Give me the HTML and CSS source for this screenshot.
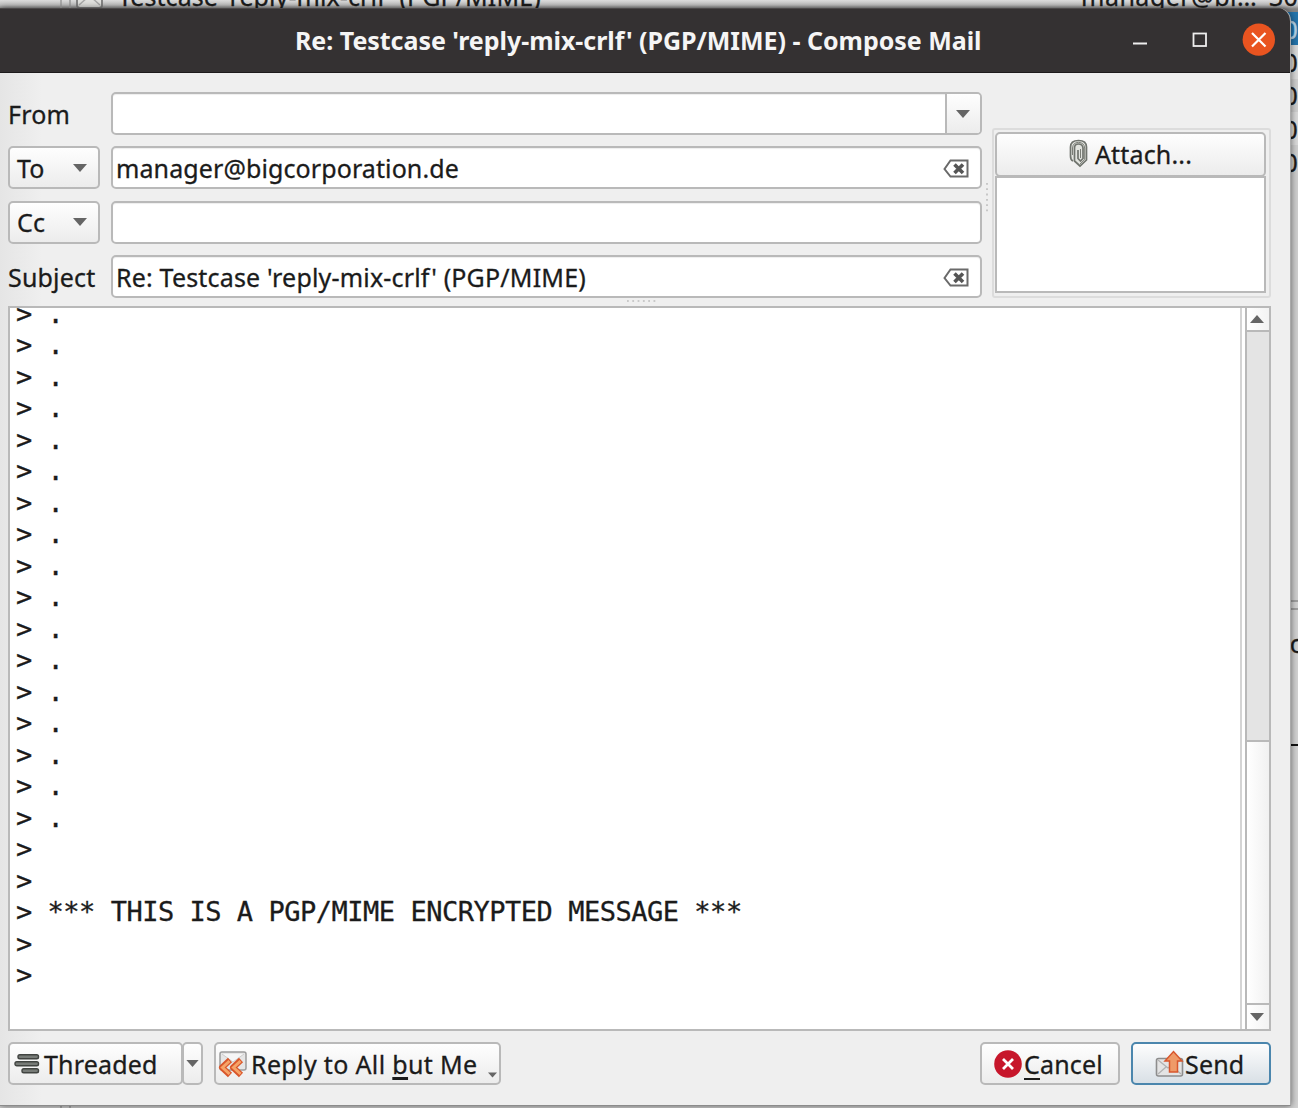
FILE: index.html
```
<!DOCTYPE html>
<html lang="en">
<head>
<meta charset="utf-8">
<title>Compose Mail</title>
<link rel="stylesheet" href="styles.css">
</head>
<body>
<div class="desktop">
  <div class="mail-list">
    <div class="row first"><span class="gutter"></span><svg class="envelope" width="27" height="26" viewBox="0 0 27 26"><rect x="1" y="1" width="25" height="24" rx="3" fill="#e2e2df" stroke="#858585" stroke-width="2"/><path d="M3 22 12 14h3l9 8" fill="none" stroke="#aaa" stroke-width="1.5"/></svg><span class="subject">Testcase 'reply-mix-crlf' (PGP/MIME)</span><span class="sender">manager@bi…</span><span class="date">30</span></div>
    <div class="row selected">0</div>
    <div class="row">0</div>
    <div class="row alt">0</div>
    <div class="row">0</div>
    <div class="row alt">0</div>
    <div class="filler"></div>
    <div class="splitter"></div>
    <div class="preview"><span class="peek">rc</span></div>
    <div class="below"><span class="gutter"></span></div>
  </div>

  <main class="window">
    <header class="titlebar">
      <h1 class="title">Re: Testcase 'reply-mix-crlf' (PGP/MIME) - Compose Mail</h1>
      <svg class="controls" width="150" height="64" viewBox="0 0 150 64">
        <path d="M0 35.500h14" stroke="#eee" stroke-width="2"/>
        <rect x="60.500" y="25.500" width="12.500" height="12.500" fill="none" stroke="#eee" stroke-width="1.800"/>
        <circle cx="125.800" cy="31.600" r="16.200" fill="#e95420"/>
        <path d="m119 25 13.500 13.500m0-13.500-13.500 13.500" stroke="#fff" stroke-width="2.200"/>
      </svg>
    </header>

    <section class="headers">
      <div class="fields">
        <div class="label">From</div>
        <div class="input combo"><span class="drop"><svg width="14" height="8" viewBox="0 0 14 8"><path d="M0 0h14L7 8z" fill="#656565"/></svg></span></div>
        <button class="btn kind"><span>To</span><svg width="14" height="8" viewBox="0 0 14 8"><path d="M0 0h14L7 8z" fill="#656565"/></svg></button>
        <div class="input"><span class="address">manager@bigcorporation.de</span><svg class="clear" width="26" height="20" viewBox="0 0 26 20"><path d="M1.500 10 7.500 1.500h17v16H7.500z" fill="#fff" stroke="#6a6a6a" stroke-width="2"/><path d="m11.500 5.500 8.500 8.500m0-8.500-8.500 8.500" stroke="#555" stroke-width="3.600"/></svg></div>
        <button class="btn kind"><span>Cc</span><svg width="14" height="8" viewBox="0 0 14 8"><path d="M0 0h14L7 8z" fill="#656565"/></svg></button>
        <div class="input"></div>
        <div class="label">Subject</div>
        <div class="input"><span>Re: Testcase 'reply-mix-crlf' (PGP/MIME)</span><svg class="clear" width="26" height="20" viewBox="0 0 26 20"><path d="M1.500 10 7.500 1.500h17v16H7.500z" fill="#fff" stroke="#6a6a6a" stroke-width="2"/><path d="m11.500 5.500 8.500 8.500m0-8.500-8.500 8.500" stroke="#555" stroke-width="3.600"/></svg></div>
      </div>
      <div class="grip-v"><svg width="4" height="32" viewBox="0 0 4 32"><path d="M2 2v30" stroke="#bdbdbd" stroke-width="1.600" stroke-dasharray="1.800 3.500"/></svg></div>
      <aside class="attachments">
        <button class="btn attach"><svg width="20" height="30" viewBox="0 0 20 30"><path d="M4 22Q1.500 21 1.500 17V8Q1.500 1.500 9.500 1.500T17.500 8v13L11 27 5.500 22V9Q5.500 5 9.500 5T14 9v10.500L11.500 22 9 19.500V11" fill="#e2e4df" stroke="#70746e" stroke-width="1.700"/><path d="M3.500 16V9Q4 3.400 9.500 3.400T15.700 9v11.500L11 25M11.500 10v9" fill="none" stroke="#7b7e77" stroke-width="1"/></svg><span>Attach...</span></button>
        <div class="list"></div>
      </aside>
    </section>
    <div class="grip-h"><svg width="30" height="4" viewBox="0 0 30 4"><path d="M1 2h29" stroke="#bdbdbd" stroke-width="1.600" stroke-dasharray="1.800 3.500"/></svg></div>

    <section class="editor">
<pre class="text">&gt; .
&gt; .
&gt; .
&gt; .
&gt; .
&gt; .
&gt; .
&gt; .
&gt; .
&gt; .
&gt; .
&gt; .
&gt; .
&gt; .
&gt; .
&gt; .
&gt; .
&gt;
&gt;
&gt; *** THIS IS A PGP/MIME ENCRYPTED MESSAGE ***
&gt;
&gt;</pre>
      <div class="scrollbar">
        <div class="arrow up"><svg width="14" height="8" viewBox="0 0 14 8"><path d="M0 8h14L7 0z" fill="#656565"/></svg></div>
        <div class="track"></div>
        <div class="thumb"></div>
        <div class="arrow down"><svg width="14" height="8" viewBox="0 0 14 8"><path d="M0 0h14L7 8z" fill="#656565"/></svg></div>
      </div>
    </section>

    <footer class="actions">
      <button class="btn threaded"><svg width="26" height="22" viewBox="0 0 26 22"><g fill="#777b77" stroke="#414441" stroke-width="1.400"><rect x="4" y="1.700" width="20.500" height="4" rx="1.800"/><rect x="1" y="8.700" width="23.500" height="4" rx="1.800"/><rect x="8" y="15.700" width="16.500" height="4" rx="1.800"/></g></svg><span>Threaded</span></button>
      <button class="btn more"><svg width="13" height="7" viewBox="0 0 14 8"><path d="M0 0h14L7 8z" fill="#656565"/></svg></button>
      <button class="btn reply"><svg width="30" height="30" viewBox="0 0 30 30"><rect x="3" y="3" width="26" height="18" rx="2" fill="#e6e6e6" stroke="#9c9c9c" stroke-width="1.500"/><path d="m5 5 11 8 11-8" fill="#f6f6f6" stroke="#ccc"/><path d="m13 11-8 7.500 8 7.500M24 11l-8 7.500 8 7.500" fill="none" stroke="#d9562b" stroke-width="6" stroke-linejoin="round"/><path d="m12.500 12-7 6.500 7 6.500M23.500 12l-7 6.500 7 6.500" fill="none" stroke="#f6a468" stroke-width="3"/></svg><span class="reply-text">Reply to All <span class="key">b</span>ut Me</span><svg class="menu" width="9" height="6" viewBox="0 0 14 8"><path d="M0 0h14L7 8z" fill="#656565"/></svg></button>
      <span class="spacer"></span>
      <button class="btn cancel"><svg width="28" height="28" viewBox="0 0 28 28"><circle cx="14" cy="14" r="13.800" fill="#c7162b"/><path d="m9 9 10 10m0-10L9 19" stroke="#fff" stroke-width="2.800"/></svg><span><span class="key thin">C</span>ancel</span></button>
      <button class="btn send"><svg width="29" height="28" viewBox="0 0 29 28"><rect x="1.500" y="8.500" width="26" height="17.500" rx="2" fill="#e4e4e4" stroke="#8d8d8d" stroke-width="1.600"/><path d="m3 10 10 8 13-8M3 24l8-7m7 0 8 7" fill="none" stroke="#b2b2b2" stroke-width="1.300"/><path d="M14.500 22V11H10L18.500 1.500 27 11H22.500v11z" fill="#ef9a68" stroke="#d8572e" stroke-width="1.500"/></svg><span>Send</span></button>
    </footer>
  </main>
</div>
</body>
</html>
```
FILE: styles.css
```
* { box-sizing: border-box; }
body { margin: 0; font: 25px/32px "Noto Sans", sans-serif; letter-spacing: .18px; color: #1b1b1b; -webkit-text-stroke: .3px; }
svg { display: block; flex: none; }
.desktop { position: relative; width: 1298px; height: 1108px; overflow: hidden; background: #d2d2d2; }

/* mail client behind the compose window */
.mail-list { display: flex; flex-direction: column; height: 1108px; }
.row { height: 33.300px; display: flex; align-items: center; justify-content: flex-end; overflow: hidden; flex: none; white-space: nowrap; background: #dadada; }
.row.alt { background: #cfcfcf; }
.row.first { height: 32px; margin-top: -20px; background: linear-gradient(#ddd 20px, #c4c4c4 25px, #858585 29px); justify-content: flex-start; }
.row.first .gutter { margin-left: 60px; }
.row.selected { background: #2474ab; color: #b8d6ec; }
.gutter { width: 11px; height: 100%; border: solid #aaa; border-width: 0 2px; flex: none; }
.envelope { margin-left: 5px; }
.subject { margin-left: 15px; width: 963px; letter-spacing: .08px; }
.sender { width: 188px; letter-spacing: .5px; }
.filler { height: 422px; background: #cfcfcf; flex: none; }
.splitter { height: 10px; border: solid #a0a0a0; border-width: 2px 0; flex: none; }
.preview { height: 136px; border-bottom: 2px solid #111; display: flex; justify-content: flex-end; padding-top: 17px; flex: none; }
.peek { margin-right: -4px; }
.below { flex: 1; display: flex; align-items: flex-end; padding-left: 60px; }
.below .gutter { height: 8px; }

/* compose window */
.window { position: absolute; left: 0; top: 8px; width: 1291px; height: 1098px; display: flex; flex-direction: column; overflow: hidden; border-radius: 0 13px 0 0; border-bottom: 1px solid #8b8b8b; border-right: 1px solid #aaa; background: linear-gradient(90deg, #e5e5e5, #efefef 42px); box-shadow: 0 0 7px rgba(0,0,0,.55); }
.titlebar { height: 65px; flex: none; margin-right: -1px; background: #343132; border-bottom: 1px solid #1d1b1c; border-top: 1px solid #4b4849; display: flex; }
.title { margin: 0; padding-left: 295px; flex: 1; color: #f5f5f5; font-size: 25px; line-height: 62px; letter-spacing: -.03px; white-space: nowrap; -webkit-text-stroke: 0; }
.controls { margin: -1px 8px 0 0; width: 150px; }
.btn, .input { border: 2px solid #b9b9b9; border-radius: 5px; height: 43px; display: flex; align-items: center; }
.btn { margin: 0; padding: 0; font: inherit; letter-spacing: inherit; color: inherit; background: linear-gradient(#fefefe, #ececec); white-space: nowrap; }
.input { background: #fff; padding: 0 11px 0 3px; justify-content: space-between; box-shadow: inset 0 1px 1px #eee; white-space: nowrap; }
.clear { margin-top: 2px; }
.headers { display: flex; padding: 19px 19px 0 8px; height: 225px; flex: none; }
.fields { width: 974px; flex: none; display: grid; grid-template-columns: 92px 1fr; grid-auto-rows: 43px; row-gap: 11.400px; column-gap: 11px; }
.label { align-self: center; white-space: nowrap; }
.address { letter-spacing: .1px; }
.input.combo { padding: 0; justify-content: flex-end; }
.drop { width: 35px; height: 100%; border-left: 2px solid #b9b9b9; padding-right: 1px; display: flex; align-items: center; justify-content: center; background: linear-gradient(#fefefe, #ececec); border-radius: 0 3px 3px 0; }
.kind { padding: 0 11px 0 7px; justify-content: space-between; }
.grip-v { width: 10px; padding: 89px 0 0 3px; flex: none; }
.attachments { flex: 1; height: 170px; margin-top: 36px; border: 2px solid #dcdcdc; border-radius: 3px; padding: 2px 3px 2px 1px; }
.attach { width: 100%; height: 45px; justify-content: center; gap: 6px; padding-bottom: 2px; }
.list { height: 117px; background: #fff; border: 2px solid #b9b9b9; margin-top: -1px; }
.grip-h { height: 8px; padding: 1px 0 0 626px; flex: none; }
.editor { height: 725px; flex: none; margin: 0 19px 0 8px; border: 2px solid #b9b9b9; background: #fff; display: flex; overflow: hidden; }
.text { margin: -10px 3px 0 0; width: 1232px; flex: none; height: 731px; overflow: hidden; border-right: 2px solid #d4d4d4; padding-left: 6px; font: 27px/31.480px "DejaVu Sans Mono", monospace; letter-spacing: -.48px; }
.scrollbar { flex: 1; border-left: 2px solid #b9b9b9; display: flex; flex-direction: column; }
.arrow { height: 24px; padding-right: 2px; display: flex; align-items: center; justify-content: center; background: linear-gradient(90deg, #fff, #f3f3f3); flex: none; }
.up { border-bottom: 2px solid #b9b9b9; }
.track { height: 408px; background: #e4e4e4; }
.thumb { flex: 1; border: solid #b9b9b9; border-width: 2px 0; background: linear-gradient(90deg, #fff, #f1f1f1); }
.actions { display: flex; padding: 11px 19px 0 8px; align-items: flex-start; }
.threaded { width: 175px; padding-left: 4px; gap: 4px; }
.more { width: 21px; margin-left: -1px; justify-content: center; }
.reply { width: 287px; margin-left: 11px; padding-left: 1px; gap: 4px; }
.reply-text { letter-spacing: .35px; }
.menu { align-self: flex-end; margin: 0 0 5px 6px; }
.spacer { flex: 1; }
.cancel { width: 140px; padding-left: 12px; gap: 2px; }
.send { width: 140px; margin-left: 11px; padding-left: 22px; gap: 1px; border-color: #4b86ad; background: linear-gradient(#fdfdfd, #d9e0e6); }
.key { text-decoration: underline; text-decoration-thickness: 3px; text-underline-offset: 3px; text-decoration-skip-ink: none; }
.thin { text-decoration-thickness: 2px; text-underline-offset: 4px; }
```
